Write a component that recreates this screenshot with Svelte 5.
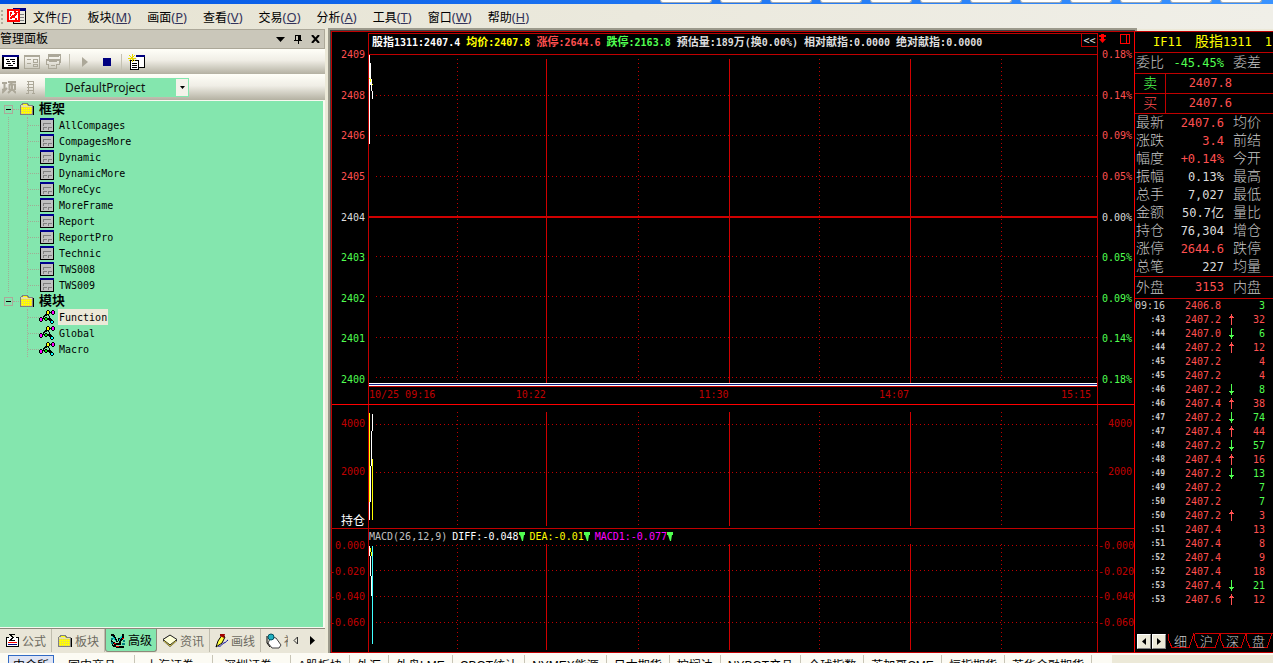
<script>
  const menus = [
    ['文件', 'F'], ['板块', 'M'], ['画面', 'P'], ['查看', 'V'], ['交易', 'O'],
    ['分析', 'A'], ['工具', 'T'], ['窗口', 'W'], ['帮助', 'H']
  ];
  const frames = ['AllCompages', 'CompagesMore', 'Dynamic', 'DynamicMore', 'MoreCyc', 'MoreFrame', 'Report', 'ReportPro', 'Technic', 'TWS008', 'TWS009'];
  const modules = ['Function', 'Global', 'Macro'];

  const info = [
    ['股指1311:2407.4', 'white'], ['均价:2407.8', 'yellow'], ['涨停:2644.6', 'up'], ['跌停:2163.8', 'down'],
    ['预估量:189万(换0.00%)', 'pale'], ['相对献指:0.0000', 'pale'], ['绝对献指:0.0000', 'pale']
  ];
  const prices = ['2409', '2408', '2406', '2405', '2404', '2403', '2402', '2401', '2400'];
  const percents = ['0.18%', '0.14%', '0.09%', '0.05%', '0.00%', '0.05%', '0.09%', '0.14%', '0.18%'];
  const tone = (i) => (i < 4 ? 'up' : i === 4 ? 'pale' : 'down');
  const solid = ['24.4%', '49.5%', '74.4%'];
  const dotted = ['12.1%', '37%', '61.9%', '86.9%'];
  const rows = [12.2, 24.4, 36.6, 61, 73.1, 85.3, 97.5];
  const macd = ['0.000', '-0.020', '-0.040', '-0.060'];

  const quotes = [
    ['最新', '2407.6', 'up', '均价'], ['涨跌', '3.4', 'up', '前结'], ['幅度', '+0.14%', 'up', '今开'],
    ['振幅', '0.13%', 'pale', '最高'], ['总手', '7,027', 'pale', '最低'], ['金额', '50.7亿', 'pale', '量比'],
    ['持仓', '76,304', 'pale', '增仓'], ['涨停', '2644.6', 'up', '跌停'], ['总笔', '227', 'pale', '均量']
  ];
  // time, price, direction (u / d / none), volume, volume tone
  const ticks = [
    ['09:16', '2406.8', '', 3, 'down'], [':43', '2407.2', 'u', 32, 'up'], [':44', '2407.0', 'd', 6, 'down'],
    [':44', '2407.2', 'u', 12, 'up'], [':45', '2407.2', '', 4, 'up'], [':45', '2407.2', '', 4, 'up'],
    [':46', '2407.2', 'd', 8, 'down'], [':46', '2407.4', 'u', 38, 'up'], [':47', '2407.2', 'd', 74, 'down'],
    [':47', '2407.4', 'u', 44, 'up'], [':48', '2407.2', 'd', 57, 'down'], [':48', '2407.4', 'u', 16, 'up'],
    [':49', '2407.2', 'd', 13, 'down'], [':49', '2407.2', '', 7, 'down'], [':50', '2407.2', '', 7, 'down'],
    [':50', '2407.2', 'u', 3, 'up'], [':51', '2407.4', '', 13, 'up'], [':51', '2407.4', '', 8, 'up'],
    [':52', '2407.4', '', 9, 'up'], [':52', '2407.4', '', 18, 'up'], [':53', '2407.4', 'd', 21, 'down'],
    [':53', '2407.6', 'u', 12, 'up']
  ];
  const sideTabs = ['细', '沪', '深', '盘'];
  const markets = ['中金所', '国内商品', '上海证券', '深圳证券', 'A股板块', '外汇', '外盘LME', 'CBOT统计', 'NYMEX能源', '日本期货', '棕榈油', 'NYBOT产品', '全球指数', '芝加哥CME', '恒指期货', '芝华金融期货'];
  const windows = Array.from({ length: 12 });

  let project = $state('DefaultProject');
  let selected = $state('Function');
  let market = $state('中金所');

  const parts = (t) => t.split(/([\u4e00-\u9fff]+)/).filter(Boolean);
  const isHan = (t) => /[\u4e00-\u9fff]/.test(t);
</script>

{#snippet mix(t)}{#each parts(t) as p}<span class:han={isHan(p)}>{p}</span>{/each}{/snippet}

{#snippet folder()}
  <svg class="ico" width="16" height="14" viewBox="0 0 16 14" shape-rendering="crispEdges" aria-hidden="true">
    <path d="M3 13h12v-9h-1v8h-11z" fill="#000" />
    <path d="M1 3h1v-1h1v-1h5v1h1v1h4v9H1z" fill="#ffff00" stroke="#808080" />
    <path d="M2 5h11M2 7h11M2 9h11M2 11h11" transform="translate(0 .5)" stroke="#d9c77a" stroke-dasharray="1 1" />
    <path d="M2 3h6M2 4h11" transform="translate(0 .5)" stroke="#e6e0a8" />
  </svg>
{/snippet}

{#snippet pageIcon()}
  <svg class="ico" width="14" height="14" viewBox="0 0 14 14" shape-rendering="crispEdges" aria-hidden="true">
    <path d="M.5 1v12.500h13V1" fill="#c0c0c0" stroke="#000" />
    <path d="M0 0h14v2H0z" fill="#000090" />
    <path d="M3.500 8V5.500H11M3.500 12V9.500H7M8.500 12V9.500H12" fill="none" stroke="#808080" />
  </svg>
{/snippet}

{#snippet nodesIcon()}
  <svg class="nodes" width="16" height="14" viewBox="0 0 16 14" shape-rendering="crispEdges" aria-hidden="true">
    <path d="M2.500 9.500L8 3l5 8M3 8.500h9M4 7l9-5M7 8l7 4" fill="none" stroke="#000" />
    <path d="M7 1h1V0h2v1h1v3h-1v1H8V4H7zM12 1h1V0h2v1h1v3h-1v1h-2V4h-1zM0 8h1V7h2v1h1v3H3v1H1v-1H0zM5 8h1V7h2v1h1v2H8v1H6v-1H5zM11 11h1v-1h2v1h1v2h-1v1h-2v-1h-1z" fill="#000" />
    <path d="M8 1h2v3H8z" fill="#ffff00" /><path d="M13 1h2v3h-2zM1 8h2v3H1z" fill="#ff00ff" />
    <path d="M6 8h2v2H6z" fill="#00e000" /><path d="M12 11h2v2h-2z" fill="#00ffff" />
  </svg>
{/snippet}

{#snippet verticals(y1, y2)}
  {#each dotted as x}<line class="dot" x1={x} x2={x} {y1} {y2} />{/each}
  {#each solid as x}<line class="rule" x1={x} x2={x} {y1} {y2} />{/each}
{/snippet}

<div class="app">
  <div class="titlebar">{#each windows as _}<i></i>{/each}</div>

  <nav class="menubar">
    <span class="grip"></span>
    <svg width="19" height="17" viewBox="0 0 19 17" shape-rendering="crispEdges" aria-hidden="true">
      <path d="M6.500.500h12v15h-12z" fill="#eceae0" stroke="#000" />
      <path d="M6 0h13v3H6z" fill="#000080" />
      <path d="M13 6.500h4M13 9.500h4M13 12.500h4" stroke="#808080" />
      <path d="M1 2h11v11H1z" fill="#fff" stroke="#f00" stroke-width="2" />
      <path d="M3 11l3-3 1 1 3-5M3 5h2M3 7h1M8 11h2M7 4h2" fill="none" stroke="#f00" stroke-width="2" />
    </svg>
    {#each menus as [name, key]}
      <button class="menu">{name}<span class="key">(<u>{key}</u>)</span></button>
    {/each}
  </nav>

  <main>
    <aside class="panel">
      <header>
        <h1>管理面板</h1>
        <button aria-label="菜单"><svg width="9" height="5" viewBox="0 0 9 5"><path d="M0 0h9L4.500 5z" /></svg></button>
        <button aria-label="固定"><svg width="8" height="9" viewBox="0 0 8 9" shape-rendering="crispEdges"><path d="M1 0h6v5h1v1H4.500v3h-1V6H0V5h1zM2 1v4h2V1z" fill-rule="evenodd" /></svg></button>
        <button aria-label="关闭"><svg width="9" height="8" viewBox="0 0 9 8"><path d="M1 0l7 8M8 0L1 8" stroke="#000" stroke-width="2" /></svg></button>
      </header>

      <div class="tools">
        <button aria-label="列表"><svg width="17" height="14" viewBox="0 0 17 14" shape-rendering="crispEdges"><path d="M1 1h15v12H1z" fill="#fff" stroke="#000" stroke-width="2" /><path d="M0 0h17v2H0z" fill="#000080" /><path d="M4 4.500h3M8 4.500h5M5 6.500h3M10 6.500h3M4 8.500h5M11 8.500h2M6 10.500h5" stroke="#000" /></svg></button>
        <button aria-label="布局"><svg width="17" height="14" viewBox="0 0 17 14" shape-rendering="crispEdges"><path d="M.5 1.500h15v12H.5zM0 .5h16M3 4.500h4M3 8.500h4M9.500 4.500h4v3h-4zM9.500 9.500h4v2h-4z" fill="none" stroke="#aca899" /></svg></button>
        <button aria-label="层叠"><svg width="17" height="15" viewBox="0 0 17 15" shape-rendering="crispEdges"><path d="M2.500 6V.5h12V9M0 5.500h13M.5 5v5h2v4h8v-4h3V5M3 2.500h10M3 7.500h8M5 11.500h4" fill="none" stroke="#aca899" stroke-width="1" /><path d="M2 0h13v2H2zM0 5h14v2H0z" fill="#aca899" /></svg></button>
        <span class="sep"></span>
        <button aria-label="运行" class="mid"><svg width="6" height="10" viewBox="0 0 6 10"><path d="M0 0l6 5-6 5z" fill="#aca899" /></svg></button>
        <button aria-label="停止" class="mid"><svg width="8" height="8" viewBox="0 0 8 8"><path d="M0 0h8v8H0z" fill="#000080" /></svg></button>
        <span class="sep"></span>
        <button aria-label="新建"><svg width="17" height="16" viewBox="0 0 17 16" shape-rendering="crispEdges"><path d="M8 2h8.500v11H11" fill="#fff" stroke="#000" /><path d="M8 1h9v2H8z" fill="#000080" /><path d="M2.500 6.500h8v9h-8z" fill="#fff" stroke="#000" /><path d="M4 9.500h5M4 11.500h5M4 13.500h5" stroke="#000" /><path d="M4 0v8M0 4h8M1 1l6 6M7 1L1 7" stroke="#e8d800" /></svg></button>
      </div>

      <div class="tools project">
        <svg width="14" height="15" viewBox="0 0 14 15" aria-hidden="true"><path d="M0 3h5M2.500 3v6L0 10M6 2h8M10 2L9 4M7 4.500h6V10M7.500 4v6M10 5v4l-4 4M10 9l4 4M0 13l5-5" fill="none" stroke="#aca899" stroke-width="2" /></svg>
        <svg width="9" height="13" viewBox="0 0 9 13" shape-rendering="crispEdges" aria-hidden="true"><path d="M2 0v12M7 0v12M1 .5h7M1 3.500h7M1 6.500h7M1 9.500h7M0 12.500h3M6 12.500h3" fill="none" stroke="#aca899" /></svg>
        <label>
          <select bind:value={project} aria-label="工程"><option>DefaultProject</option></select>
          <span class="drop"><svg width="5" height="3" viewBox="0 0 5 3"><path d="M0 0h5L2.500 3z" /></svg></span>
        </label>
      </div>

      <div class="tree">
        {#each [['框架', frames], ['模块', modules]] as [group, items], g}
          <div class="row group"><span class="box"></span><i class="stub"></i>{@render folder()}<b>{group}</b></div>
          <ul class:linked={g === 0}>
            {#each items as item}
              <li class="row">
                {#if g === 0}{@render pageIcon()}{:else}{@render nodesIcon()}{/if}
                <button class:chosen={item === selected} onclick={() => (selected = item)}>{item}</button>
              </li>
            {/each}
          </ul>
        {/each}
      </div>

      <div class="tabs">
        <button><svg width="15" height="15" viewBox="0 0 15 15" shape-rendering="crispEdges"><path d="M1 4.500h3M11 4.500h3M1.500 4v9.500h12V4" fill="#fff" stroke="#000" /><path d="M10 1.500H5l3 3-3 3h5" fill="none" stroke="#000" /><path d="M3 9.500h9" stroke="#f00" /><path d="M3 11.500h9" stroke="#000080" /></svg>公式</button>
        <button>{@render folder()}板块</button>
        <button class="on"><svg width="16" height="15" viewBox="0 0 16 15" shape-rendering="crispEdges"><path d="M1 2h2l2 3 2 4M13 1v4l-3 3v4M1 8l4 3h5M2 12l5 2h7M8 7l3-2" fill="none" stroke="#000" stroke-width="2" /><path d="M2 3l4 5M12 3l-3 5" stroke="#00c8c8" /><path d="M12 5h2M6 13h3M4 10h2" stroke="#f00" /><path d="M1 6h2M1 10h2M12 11h3M13 8h2" stroke="#008080" stroke-width="2" /></svg>高级</button>
        <button><svg width="16" height="14" viewBox="0 0 16 14"><path d="M1 7l7 6 7-6v-1L8 1 1 5z" fill="#404040" /><path d="M1 5.500L8 1l7 4.500L8 11z" fill="#ffffd8" stroke="#222" /><path d="M2 7l6 5 6-5" fill="none" stroke="#d8c840" /></svg>资讯</button>
        <button><svg width="14" height="15" viewBox="0 0 14 15"><path d="M1 14l2-6 4-6 3 2-3 6z" fill="#ffff40" stroke="#000" /><path d="M5 1h5l-1 4-4-2z" fill="#a00000" /><path d="M3 13c4 1 3-2 6-3s2-2 4-3" fill="none" stroke="#0000a0" /></svg>画线</button>
        <button class="cut"><svg width="16" height="16" viewBox="0 0 16 16"><path d="M5 4l5 1 5 7-2 3H6L2 10z" fill="#fff" stroke="#404040" /><circle cx="5" cy="4" r="3" fill="#20b0c0" stroke="#005060" /><path d="M1 3v7l3 4" stroke="#000" fill="none" /></svg>社区</button>
        <button class="nav" aria-label="向左"><svg width="5" height="9" viewBox="0 0 5 9"><path d="M4.500 1v7L1 4.500z" fill="none" stroke="#333" /></svg></button>
        <button class="nav" aria-label="向右"><svg width="5" height="9" viewBox="0 0 5 9"><path d="M0 0l5 4.500L0 9z" /></svg></button>
      </div>
    </aside>

    <section class="charts">
      <div class="chart price">
        <div class="axis left">{#each prices as p, i}<span class={tone(i)}>{p}</span>{/each}</div>
        <div class="body">
          <div class="info">
            {#each info as [t, c]}<span class={c}>{@render mix(t)}</span>{/each}
            <button>&lt;&lt;</button>
          </div>
          <svg class="plot framed" aria-hidden="true">
            {@render verticals(4, '100%')}
            {#each rows as y}<line class="dot" x1="7" x2="100%" y1="{y}%" y2="{y}%" />{/each}
            <line class="rule thick" x1="0" x2="100%" y1="48.9%" y2="48.9%" />
            <path d="M.5 0v89M1.500 8v22M2.500 24v12M3.500 36v8" stroke="#fff" />
            <path d="M0 23.500h1M1.500 24v3M3.500 29v1" stroke="#ff0" />
            <line x1="0" x2="100%" y1="99.5%" y2="99.5%" stroke="#fff" stroke-width="3" />
            <line x1="0" x2="100%" y1="99.5%" y2="99.5%" stroke="#102080" />
          </svg>
          <div class="times"><span><em>10/25 09:16</em>10:22</span><span>11:30</span><span>14:07</span><span>15:15</span></div>
        </div>
        <div class="axis right">
          <div class="marks">
            <svg width="9" height="9" viewBox="0 0 9 9" aria-hidden="true"><path d="M3 0h3v1h2v2H6v2h2l-3.500 4L1 5h2V3H1V1h2z" fill="#f00" /></svg>
            <svg width="10" height="10" viewBox="0 0 10 10" shape-rendering="crispEdges" aria-hidden="true"><path d="M.5.500h9v9h-9zM6.500 0v10" fill="none" stroke="#f00" /></svg>
          </div>
          {#each percents as p, i}<span class={tone(i)}>{p}</span>{/each}
        </div>
      </div>

      <div class="chart volume">
        <div class="axis left"><span>4000</span><span>2000</span><span class="white">{@render mix('持仓')}</span></div>
        <div class="body">
          <svg class="plot" aria-hidden="true">
            {@render verticals(7, '98%')}
            {#each ['15.8%', '54.8%'] as y}<line class="dot" x1="7" x2="100%" y1={y} y2={y} />{/each}
            <path d="M.5 8v107M3.500 54v61" stroke="#ff0" />
            <path d="M.5 97v18M1.500 61v36M2.500 26v35M3.500 9v17" stroke="#fff" />
          </svg>
        </div>
        <div class="axis right"><span>4000</span><span>2000</span><span></span></div>
      </div>

      <div class="chart macd">
        <div class="axis left">{#each macd as m}<span>{m}</span>{/each}</div>
        <div class="body">
          <div class="legend">
            <span class="gray">MACD(26,12,9)</span>
            {#each [['DIFF:-0.048', 'white'], ['DEA:-0.01', 'yellow'], ['MACD1:-0.077', 'magenta']] as [t, c]}
              <span class={c}>{t}<svg width="6" height="9" viewBox="0 0 6 9" aria-hidden="true"><path d="M0 0h6v3H5L4 9H3L1 3H0z" fill="#50ff50" /></svg></span>
            {/each}
          </div>
          <svg class="plot" aria-hidden="true">
            {@render verticals(0, '98%')}
            {#each ['1%', '24.5%', '48.5%', '72.5%'] as y}<line class="dot" x1="7" x2="100%" y1={y} y2={y} />{/each}
            <path d="M3.500 2v98" stroke="#40ffff" />
            <path d="M.5 2v10M1.500 12v20M2.500 32v20" stroke="#fff" />
            <path d="M1.500 4v4M2.500 8v4" stroke="#ff0" />
          </svg>
        </div>
        <div class="axis right">{#each macd as m}<span>{m.startsWith('-') ? m : '-' + m}</span>{/each}</div>
      </div>
    </section>

    <aside class="side">
      <h2><span>IF11</span><span>{@render mix('股指1311')}</span><span>1</span></h2>
      <table class="quote">
        <colgroup><col class="c1" /><col /><col class="c3" /></colgroup>
        <tbody>
          <tr class="line"><th>委比</th><td class="down">-45.45%</td><th>委差</th></tr>
          <tr class="line"><th class="order down">卖</th><td class="up offer" colspan="2">2407.8</td></tr>
          <tr class="line"><th class="order up">买</th><td class="up offer" colspan="2">2407.6</td></tr>
          {#each quotes as [a, v, c, b]}
            <tr><th>{a}</th><td class={c}>{@render mix(v)}</td><th>{b}</th></tr>
          {/each}
          <tr class="total"><th>外盘</th><td class="up">3153</td><th>内盘</th></tr>
        </tbody>
      </table>
      <table class="ticks">
        <tbody>
          {#each ticks as [t, p, d, n, c], i}
            <tr>
              <td class:small={i > 0}>{t}</td>
              <td class="up">{p}</td>
              <td>
                {#if d}
                  <svg width="5" height="11" viewBox="0 0 5 11" shape-rendering="crispEdges" aria-hidden="true">
                    <path d={d === 'u' ? 'M2.500 0v11M1 2.500h3M0 3.500h5' : 'M2.500 0v11M0 7.500h5M1 8.500h3'} stroke={d === 'u' ? '#ff5050' : '#50ff50'} />
                  </svg>
                {/if}
              </td>
              <td class={c}>{n}</td>
            </tr>
          {/each}
        </tbody>
      </table>
      <div class="sidetabs">
        <button class="step" aria-label="上一页"><svg width="4" height="7" viewBox="0 0 4 7"><path d="M4 0v7L0 3.500z" /></svg></button>
        <button class="step" aria-label="下一页"><svg width="4" height="7" viewBox="0 0 4 7"><path d="M0 0v7l4-3.500z" /></svg></button>
        {#each sideTabs as t, i}
          <button class="slant">
            <svg width="30" height="17" viewBox="0 0 30 17" shape-rendering="crispEdges" aria-hidden="true"><path d="{i ? 'M2 1.500h26' : ''}M1 2v5l4 8.500h17l5-14" fill="none" stroke="#d00000" /></svg>
            <span>{t}</span>
          </button>
        {/each}
      </div>
    </aside>
  </main>

  <footer>
    {#each markets as m, i}
      <button class:wide={i > 0 && i < 4} class:current={m === market} onclick={() => (market = m)}>{m}</button>
    {/each}
    <span class="rest"></span>
  </footer>
</div>

<style>
  :global(body) { margin: 0; background: #ece9d8; }
  * { box-sizing: border-box; }
  button { border: 0; margin: 0; padding: 0; background: none; font: inherit; color: inherit; white-space: nowrap; }
  svg { display: block; flex: none; }

  .app {
    height: 100vh; min-height: 600px; overflow: hidden;
    display: grid; grid-template-rows: 4px 25px 1fr 10px; grid-template-columns: minmax(0, 1fr);
    font-family: "Noto Sans", "Noto Sans CJK SC", sans-serif; font-size: 12px; color: #000;
  }

  .titlebar { display: flex; justify-content: flex-end; gap: 8px; padding-right: 11px; background: linear-gradient(90deg, #0054e3, #3a93ff); overflow: hidden; }
  .titlebar i { width: 42px; height: 3px; background: #fff; border: 1px solid #a0a8b0; border-top: 0; border-radius: 0 0 3px 3px; }
  .titlebar i:first-child { width: 52px; }

  .menubar { display: flex; align-items: center; background: linear-gradient(90deg, #e6e3d2, #f0efe8); }
  .grip { width: 2px; height: 14px; margin: 0 4px 0 1px; background: repeating-linear-gradient(#b0ad9c 0 2px, transparent 2px 4px); }
  .menu { margin-left: 16px; }
  .menubar svg + .menu { margin-left: 7px; }
  .key { font-size: 13px; color: #33335a; }

  main { display: grid; grid-template-columns: 325px minmax(0, 1fr) 139px; min-height: 0; }

  .panel { display: flex; flex-direction: column; min-width: 0; min-height: 0; background: #e9e6d8; }
  .panel header { height: 20px; flex: none; display: flex; align-items: center; gap: 9px; padding-right: 4px; background: #cac7ba; border: 1px solid #aca899; border-left: 0; }
  .panel h1 { flex: 1; margin: 0; font-size: 12px; font-weight: 400; line-height: 18px; }
  .tools { flex: none; height: 25px; display: flex; align-items: center; gap: 5px; padding: 0 2px; background: linear-gradient(#fffff8, #f0eee6 45%, #b4b1a2); }
  .tools .sep { width: 1px; height: 16px; margin: 0 1px; background: #c4c1b2; }
  .tools .mid { width: 17px; display: flex; justify-content: center; }
  .project { height: 26px; gap: 10px; }
  .project label { display: flex; height: 19px; background: #84e6ae; }
  .project select { appearance: none; width: 131px; height: 19px; border: 0; padding: 0 0 0 20px; background: #84e6ae; color: #111; font: 12px/19px "Noto Sans", sans-serif; }
  .drop { width: 13px; display: flex; align-items: center; justify-content: center; background: #f4f2ea; border: 1px solid #84e6ae; border-left: 0; }

  .tree { flex: 1; min-height: 0; overflow: hidden; background: #84e6ae; border: 1px solid #f8f8f0; border-width: 1px 2px 1px 0; font: 10px/16px "DejaVu Sans Mono", monospace; }
  .row { height: 16px; display: flex; align-items: center; }
  .group { padding-left: 4px; }
  .group b { margin-left: 4px; font: bold 13px/14px "Noto Sans CJK SC", sans-serif; align-self: flex-start; }
  .box { width: 9px; height: 9px; border: 1px solid #aca899; background: linear-gradient(#000, #000) center / 5px 1px no-repeat; }
  .stub { width: 6px; border-top: 1px dotted #aca899; }
  .tree ul { list-style: none; margin: 0; padding: 0 0 0 27px; }
  .tree .linked { background: repeating-linear-gradient(#a0ac94 0 1px, #84e6ae 1px 2px) 8px 0 / 1px 100% no-repeat; }
  .tree li::before { content: ""; width: 11px; height: 16px; margin-right: 1px; border-left: 1px dotted #aca899; background: repeating-linear-gradient(90deg, #a0ac94 0 1px, transparent 1px 2px) 0 8px / 100% 1px no-repeat; }
  .tree .nodes { margin: 0 -1px; }
  .tree li button { height: 16px; margin-left: 4px; padding: 1px 1px 0; line-height: 16px; }
  .tree li .chosen { background: #ece9d8; }

  .tabs { flex: none; height: 25px; display: flex; overflow: hidden; color: #6c6a60; border-top: 1px solid #8c897a; }
  .tabs button { display: flex; align-items: center; gap: 2px; padding: 0 5px; height: 23px; border-right: 1px solid #c0bdae; }
  .tabs .on { color: #000; background: #84e6ae; border: 1px solid #8c897a; border-top: 0; border-radius: 0 0 3px 3px; padding: 0 4px; }
  .tabs .cut { width: 27px; overflow: hidden; padding-right: 0; border: 0; }
  .tabs .nav { border: 0; padding: 0 7px 0 5px; }

  .charts { min-width: 0; min-height: 0; display: grid; grid-template-rows: 373fr 124fr 124fr; background: #000; border-left: 1px solid #c00000; border-top: 1px solid #c00000; margin: 2px 0 0 6px; box-shadow: 0 0 0 1px #404040, 0 0 0 3px #9c9a8c; font: 10px/13px "DejaVu Sans Mono", monospace; color: #c00000; }
  .chart { display: grid; grid-template-columns: 36px minmax(0, 1fr) 36px; min-height: 0; border-bottom: 1px solid #f00; }
  .macd, .volume { border-color: #c00000; }
  .axis { position: relative; display: flex; flex-direction: column; justify-content: space-between; white-space: nowrap; }
  .axis span { height: 13px; display: block; }
  .left { text-align: right; padding-right: 3px; align-items: flex-end; }
  .right { padding-left: 4px; }
  .price .axis { padding-top: 16px; padding-bottom: 18px; }
  .volume .axis { padding-top: 12px; padding-bottom: 2px; }
  .macd .axis { padding-top: 10px; padding-bottom: 23px; }
  .volume .right { padding-left: 10px; }
  .macd .right { padding-left: 0; }
  .marks { position: absolute; top: 2px; left: 0; right: 4px; display: flex; justify-content: space-between; }
  .body { min-width: 0; min-height: 0; display: flex; flex-direction: column; border: 1px solid #c00000; border-width: 0 1px 0 1px; }
  .price .body { margin-top: 1px; border-top-width: 1px; }
  .plot { flex: 1 1 0; width: 100%; min-height: 0; shape-rendering: crispEdges; }
  .framed { border: 1px solid #c00000; border-width: 1px 0; }
  .rule { stroke: #d00000; }
  .thick { stroke-width: 2; }
  .dot { stroke: #c00000; stroke-dasharray: 1 3; }
  .info { height: 20px; flex: none; display: flex; gap: 6px; padding-left: 3px; line-height: 14px; font-weight: 700; white-space: nowrap; overflow: hidden; }
  .info .han { font-size: 11px; line-height: 14px; }
  .info button { width: 16px; height: 13px; margin-left: auto; border: 1px solid #c00000; border-width: 0 0 1px 1px; color: #e0e0e0; font-weight: 400; line-height: 11px; }
  .times { height: 17px; flex: none; display: grid; grid-template-columns: 24.3% 25.1% 24.8% 1fr; text-align: right; line-height: 15px; }
  .times span:first-child { display: flex; justify-content: space-between; }
  .times span:last-child { padding-right: 6px; }
  .times em { font-style: normal; }
  .legend { height: 15px; flex: none; display: flex; gap: 5px; line-height: 17px; white-space: nowrap; }
  .legend span { display: flex; align-items: center; }
  .han { font-family: "Noto Sans CJK SC", sans-serif; font-size: 12px; }

  .up { color: #ff5050; }
  .down { color: #50ff50; }
  .white { color: #fff; }
  .pale { color: #dcdcdc; }
  .gray { color: #c0c0c0; }
  .yellow { color: #ff0; }
  .magenta { color: #f0f; }

  .side { min-width: 0; min-height: 0; display: flex; flex-direction: column; background: #000; border-left: 1px solid #f00; border-top: 1px solid #c00000; margin-top: 2px; border-bottom: 1px solid #c00000; overflow: hidden; color: #c8c8c8; font: 12px/18px "DejaVu Sans Mono", monospace; }
  .side h2 { height: 21px; flex: none; display: flex; align-items: baseline; gap: 13px; margin: 0; padding-left: 18px; color: #ff0; font: 12px/20px "DejaVu Sans Mono", monospace; border-bottom: 1px solid #c00000; white-space: nowrap; }
  .side h2 .han { font-size: 14px; line-height: 14px; }
  table { border-collapse: collapse; table-layout: fixed; width: 100%; flex: none; }
  th, td { padding: 0; font-weight: 400; white-space: nowrap; text-align: right; }
  .c1 { width: 30px; }
  .c3 { width: 49px; }
  .quote th { height: 18px; font: 300 14px/14px "Noto Sans CJK SC", sans-serif; text-align: left; vertical-align: top; padding-left: 1px; }
  .quote td + th { padding-left: 9px; }
  .quote .line th, .quote .line td { height: 20px; border-bottom: 1px solid #c00000; }
  .quote .line th { line-height: 16px; }
  .quote .total th, .quote .total td { height: 22px; border-top: 1px solid #c00000; border-bottom: 1px solid #c00000; }
  .quote .total th { line-height: 18px; }
  .quote .offer { padding-right: 41px; }
  .quote .order { border-right: 1px solid #c00000; text-align: center; }
  .quote .order.up { color: #ff5050; }
  .quote .order.down { color: #50ff50; }
  .quote .han { font-size: 13px; line-height: 16px; }
  .ticks { font-size: 10px; line-height: 14px; }
  .ticks td { height: 14px; }
  .ticks td:nth-child(1) { width: 30px; }
  .ticks td:nth-child(2) { width: 56px; }
  .ticks td:nth-child(3) { width: 13px; }
  .ticks td:nth-child(4) { padding-right: 8px; }
  .ticks svg { margin-left: auto; }
  .ticks .small { font-size: 8px; font-weight: 700; }
  .sidetabs { margin-top: auto; height: 20px; flex: none; display: flex; padding-left: 2px; }
  .step { width: 14px; height: 15px; margin: 2px 1px 0 0; flex: none; display: flex; align-items: center; justify-content: center; background: #ece9d8; border: 1px solid #fff; border-right-color: #808080; border-bottom-color: #808080; }
  .slant { width: 26px; flex: none; display: grid; justify-items: start; align-items: start; }
  .slant svg, .slant span { grid-area: 1 / 1; }
  .slant span { padding-left: 7px; font: 300 13px/17px "Noto Sans CJK SC", sans-serif; }

  footer { display: flex; align-items: flex-start; padding: 2px 0 0 8px; overflow: hidden; background: #fcfbf4; white-space: nowrap; font: 12px/16px "Liberation Sans", "Noto Sans CJK SC", sans-serif; }
  footer button { flex: none; height: 22px; padding: 1px 7px; border-right: 1px solid #c8c5b6; }
  footer .wide { padding: 1px 18px 1px 11px; }
  footer .current { padding: 1px 4px; margin-right: 3px; background: #dfe4f4; border: 1px solid #316ac5; }
  .rest { flex: 1; align-self: stretch; margin-left: 20px; background: #ece9d8; }
</style>
